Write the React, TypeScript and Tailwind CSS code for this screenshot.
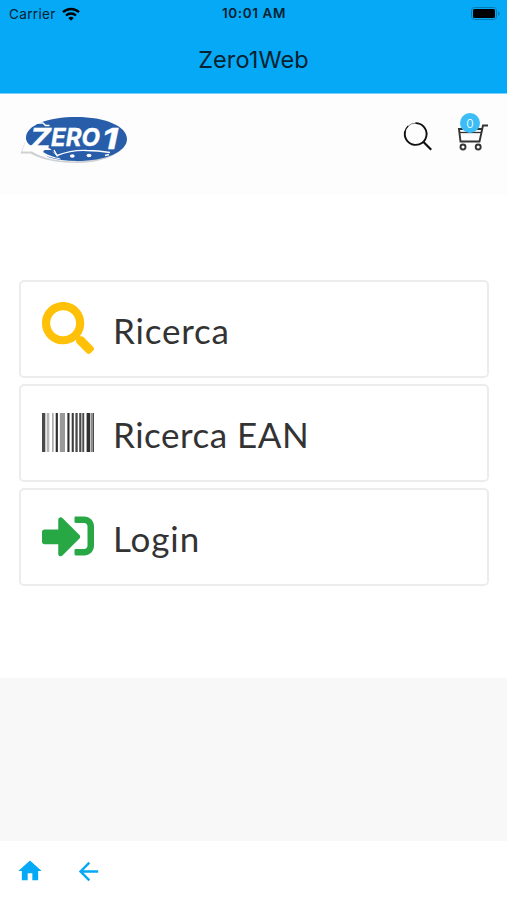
import type { ReactNode } from 'react'
import { FaSearch, FaSignInAlt } from 'react-icons/fa'
import { MdArrowBack, MdHome } from 'react-icons/md'

// ── Types ─────────────────────────────────────────────────────────────────────
interface MenuItem {
  label: string
  icon: ReactNode
  labelClass: string
}

// ── Barcode bars: [x, width, colour] ──────────────────────────────────────────
const bars: [number, number, string][] = [
  [0, 3.3, '#4a4a4a'],
  [4.7, 2.6, '#b5b5b5'],
  [10.3, 1.2, '#8c8c8c'],
  [13.7, 2.2, '#2e2e2e'],
  [17.8, 5.2, '#999999'],
  [25.4, 2.1, '#2e2e2e'],
  [29.7, 2.1, '#3c3c3c'],
  [33.4, 2.3, '#4a4a4a'],
  [37.2, 2.2, '#4a4a4a'],
  [40.3, 1.9, '#4a4a4a'],
  [44.6, 3.4, '#303030'],
  [48.5, 1.5, '#8a8a8a'],
  [50.4, 1.6, '#4a4a4a'],
]

function BarcodeIcon() {
  return (
    <svg width="52" height="39" viewBox="0 0 52 39">
      {bars.map(([x, width, fill]) => (
        <rect key={x} x={x} y="0" width={width} height="39" fill={fill} />
      ))}
    </svg>
  )
}

// ── Menu data ─────────────────────────────────────────────────────────────────
const menu: MenuItem[] = [
  {
    label: 'Ricerca',
    icon: <FaSearch className="size-[52px] text-[#ffc107]" />,
    labelClass: 'tracking-[0.8px]',
  },
  {
    label: 'Ricerca EAN',
    icon: <BarcodeIcon />,
    labelClass: 'tracking-[0.5px]',
  },
  {
    label: 'Login',
    icon: <FaSignInAlt className="size-[52px] text-[#28a745]" />,
    labelClass: 'tracking-[0.9px]',
  },
]

// ── Status bar ────────────────────────────────────────────────────────────────
function StatusBar() {
  return (
    <div className="grid h-7 grid-cols-3 items-center pr-[6px] pl-[9px] text-[#06212f]">
      <div className="flex items-center gap-[6px]">
        <span className="text-[13.5px] tracking-[0.35px]">Carrier</span>
        <svg width="18" height="14" viewBox="0 0 18 14" fill="none" stroke="#000" strokeWidth="2.3">
          <path d="M1 5.2a11.6 11.6 0 0 1 16 0" />
          <path d="M4 8.5a7.3 7.3 0 0 1 10 0" />
          <path d="M9 13.7 6.3 11a3.9 3.9 0 0 1 5.4 0Z" fill="#000" stroke="none" />
        </svg>
      </div>
      <span className="pr-[2px] pb-px text-center text-[13.5px] font-semibold tracking-[0.6px]">10:01 AM</span>
      <svg className="justify-self-end" width="30" height="14" viewBox="0 0 30 14">
        <rect x="0.5" y="0.5" width="25" height="12" rx="3" fill="none" stroke="#047bb5" />
        <rect x="2" y="2" width="22" height="9" rx="1.6" fill="#000" />
        <path d="M27 4.7v4c1-.4 1.7-1.1 1.7-2s-.7-1.6-1.700-2Z" fill="#047bb5" />
      </svg>
    </div>
  )
}

// ── Brand logo ────────────────────────────────────────────────────────────────
function Logo() {
  return (
    <svg width="110" height="50" viewBox="0 0 110 50" fontFamily="Inter, sans-serif">
      {/* shadow and speech-bubble tail */}
      <path d="M5 27 0.500 38.500h10C20 44 36 48 56 48c24 0 44-7 50-20Z" fill="#cfd2d5" />
      <path d="M6 25 2 36.500h10C22 43 38 46.500 56 46.500L70 30Z" fill="#fff" />
      {/* oval */}
      <path
        d="M6 23C6 10 28 2 56.500 2S107 11 107 24 85 46 57 46c-11 0-21-1.500-29-4L13 32C9 30 6 27 6 23Z"
        fill="#285ea9"
      />
      <path d="M9 30 5 36h9c8 4 17 7 27 8.500L30 33.500Z" fill="#fff" />
      <path d="m23 37 1.500-2H32c2 4 5 6.500 9 8.500-7-1-13-3.500-18-6.500Z" fill="#285ea9" />
      <path d="M12.500 10.500 15 8h8l2.500 2.500h4" fill="none" stroke="#fff" strokeWidth="1.500" />
      <g fill="#fff" stroke="#fff" strokeWidth="0.400" fontStyle="italic" fontWeight="700">
        <text x="10" y="34" fontSize="29" textLength="21" lengthAdjust="spacingAndGlyphs">
          Z
        </text>
        <text x="31" y="31" fontSize="24" textLength="49" lengthAdjust="spacingAndGlyphs">
          ERO
        </text>
        <text x="82" y="33.500" fontSize="29" textLength="16" lengthAdjust="spacingAndGlyphs">
          1
        </text>
      </g>
      <path d="m34 35 3 5.500c9-3.500 20-5.500 30-5 9 .2 16 1 23 2" fill="none" stroke="#fff" strokeWidth="1.400" />
      <ellipse cx="52.300" cy="41" rx="2.400" ry="1.800" fill="#fff" />
      <ellipse cx="69" cy="40.500" rx="2.400" ry="1.800" fill="#fff" />
      <path d="m85 40.500 4-1" stroke="#fff" strokeWidth="1.800" />
    </svg>
  )
}

function CartButton() {
  return (
    <div className="relative h-10 w-8">
      <svg width="32" height="40" viewBox="0 0 32 40" fill="none" stroke="#333" strokeWidth="1.900">
        <path d="M31 13.500h-5l-3.500 16H3.500L2 17h23" />
        <path d="M3 20.500h21" strokeWidth="1.300" />
        <circle cx="6" cy="35" r="2.500" />
        <circle cx="21.200" cy="35" r="2.500" />
      </svg>
      <span className="absolute top-[1px] left-[3px] flex size-5 items-center justify-center rounded-full bg-[#3dbdf5] pt-px text-[12px] font-light text-white">
        0
      </span>
    </div>
  )
}

// ── Main screen ───────────────────────────────────────────────────────────────
export default function App() {
  return (
    <div className="flex h-[900px] w-[507px] flex-col bg-white font-['Inter',sans-serif]">
      <header className="h-[94px] border-b border-[#79d1fb] bg-[#05a9f5]">
        <StatusBar />
        <h1 className="pt-[14px] text-center text-[23.5px] leading-9 tracking-[0.1px] text-[#06212f]">
          Zero1Web
        </h1>
      </header>

      <div className="flex h-[101px] items-start justify-between bg-[#fdfdfd] pt-[18px] pr-[18px] pl-5">
        <div className="pt-[3px]">
          <Logo />
        </div>
        <div className="flex items-start gap-6">
          <svg className="mt-2" width="32" height="32" viewBox="0 0 32 32" fill="none" stroke="#111">
            <path d="M6.500 6.600A11 11 0 0 1 15 3.100" strokeWidth="0.900" stroke="#777" />
            <path d="M14.500 3.100A10.900 10.900 0 1 1 4.200 11" strokeWidth="1.900" />
            <path d="M4.200 11a11 11 0 0 1 3-5" strokeWidth="1.200" />
            <path d="m22.200 21.700 8 8" strokeWidth="2.200" />
          </svg>
          <CartButton />
        </div>
      </div>

      <main className="flex h-[483px] flex-col gap-1.5 pt-[85px] pr-[18px] pl-[19px]">
        {menu.map((item) => (
          <button
            key={item.label}
            className="flex h-[98px] shrink-0 items-center gap-[19px] rounded-[5px] border-2 border-[#ececec] bg-white pb-[2px] pl-[21px] text-left"
          >
            {item.icon}
            <span
              className={`pt-[4px] font-['Lato',sans-serif] text-[35px] leading-none text-[#333] ${item.labelClass}`}
            >
              {item.label}
            </span>
          </button>
        ))}
      </main>

      <div className="h-[163px] bg-[#f8f8f8]" />

      <nav className="flex flex-1 items-start gap-[30px] pt-4 pl-4 text-[#05a9f5]">
        <MdHome className="size-7" />
        <MdArrowBack className="size-[29px]" />
      </nav>
    </div>
  )
}
